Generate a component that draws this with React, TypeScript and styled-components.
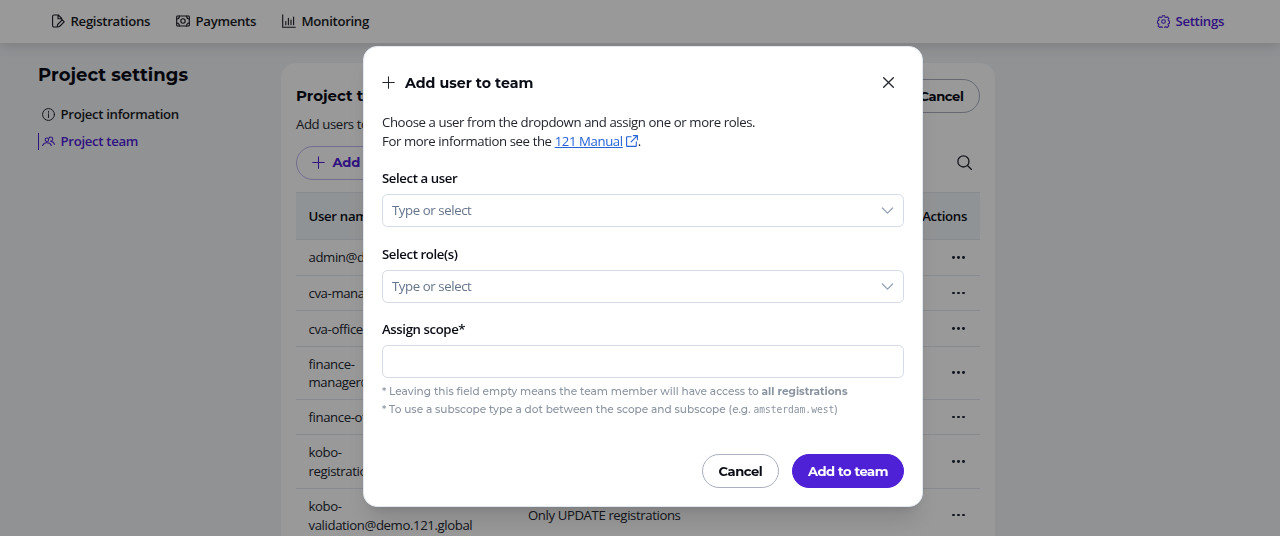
import React from "react";
import styled, { createGlobalStyle, css } from "styled-components";

const GlobalStyle = createGlobalStyle`
  * { box-sizing: border-box; }
  body {
    margin: 0;
    height: 536px;
    overflow: hidden;
    background: #f1f3f7;
    color: #23262f;
    font: 400 13.2px/18.7px "Open Sans", sans-serif;
    letter-spacing: -0.4px;
  }
  button, input { font: inherit; color: inherit; }
  svg { display: block; flex: none; }
`;

const heading = css`
  font-family: Montserrat, Inter, sans-serif;
  font-weight: 700;
  letter-spacing: 0;
  color: #0b0d16;
`;

const Page = styled.div`
  height: 536px;
  overflow: hidden;
`;

const TopBar = styled.header`
  display: flex;
  justify-content: space-between;
  height: 43px;
  padding: 0 56px 0 51px;
  background: #fff;
  box-shadow: 0 2px 14px rgba(0, 0, 0, 0.16);
`;

const TabGroup = styled.nav`
  display: flex;
  gap: 26px;
`;

const Tab = styled.a<{ $active?: boolean }>`
  display: flex;
  align-items: center;
  gap: 5.5px;
  font-weight: 600;
  letter-spacing: -0.32px;
  color: ${(p) => (p.$active ? "#4f21d6" : "#1a1c25")};
  svg { margin-bottom: 1px; }
`;

const Content = styled.div`
  display: flex;
  padding-left: 38px;
`;

const Sidebar = styled.aside`
  width: 243px;
  padding-top: 20px;
`;

const SideTitle = styled.h1`
  ${heading}
  margin: 0 0 19px;
  font-size: 18px;
  line-height: 24px;
  letter-spacing: 0.05px;
`;

const SideLink = styled.a<{ $active?: boolean }>`
  display: flex;
  align-items: center;
  gap: 5.5px;
  height: 17px;
  margin-bottom: 10px;
  padding-left: 3px;
  border-left: 1px solid ${(p) => (p.$active ? "#4f21d6" : "transparent")};
  font-weight: 600;
  letter-spacing: -0.32px;
  color: ${(p) => (p.$active ? "#4f21d6" : "#1a1c25")};
`;

const Card = styled.section`
  width: 714px;
  height: 560px;
  margin-top: 20px;
  padding: 15px;
  border-radius: 15px;
  background: #fff;
`;

const CardHead = styled.div`
  display: flex;
  justify-content: space-between;
  align-items: center;
  height: 36px;
`;

const CardTitle = styled.h2`
  ${heading}
  margin: 0;
  font-size: 15px;
`;

const CardText = styled.p`
  margin: 1px 0 12px;
`;

const PillButton = styled.button<{ $kind?: "primary" | "soft" }>`
  ${heading}
  display: flex;
  align-items: center;
  justify-content: center;
  height: 34px;
  min-width: 77px;
  padding: 0 15px;
  border: 1px solid #a9b0bf;
  border-radius: 17px;
  background: #fff;
  font-size: 13.1px;
  letter-spacing: -0.44px;
  ${(p) => p.$kind === "primary" && css`
    border-color: #4f21d6;
    background: #4f21d6;
    color: #fff;
  `}
  ${(p) => p.$kind === "soft" && css`
    gap: 7.5px;
    letter-spacing: -0.1px;
    border-color: #c3b8f5;
    color: #4f21d6;
  `}
`;

const Toolbar = styled.div`
  display: flex;
  justify-content: space-between;
  align-items: center;
  padding-right: 8px;
  margin-bottom: 12px;
`;

const Table = styled.div`
  width: 684px;
`;

const Row = styled.div<{ $height: number; $head?: boolean }>`
  display: grid;
  grid-template-columns: 219.5px 1fr auto;
  align-items: center;
  height: ${(p) => p.$height}px;
  padding: 1.2px 13px 0 12.5px;
  border-bottom: 1px solid #e2e8f0;
  ${(p) => p.$head && css`
    border-top: 1px solid #e2e8f0;
    background: #f1f5f9;
    font-weight: 600;
    letter-spacing: -0.32px;
    color: #0b0d16;
  `}
`;

const Cell = styled.div`
  white-space: pre-line;
`;

const Dots = styled.span`
  display: flex;
  gap: 2.4px;
  margin: 0 2px 1px 0;
  &::before, &::after, i { content: ""; width: 2.8px; height: 2.8px; border-radius: 50%; background: #1c2333; }
`;

const Overlay = styled.div`
  position: fixed;
  inset: 0;
  display: flex;
  justify-content: center;
  align-items: flex-start;
  padding: 46px 0 0 6px;
  background: rgba(0, 0, 0, 0.4);
`;

const Dialog = styled.div`
  width: 560px;
  height: 461px;
  padding: 17.5px 18px;
  border: 1px solid #e2e8f0;
  border-radius: 14px;
  background: #fff;
  box-shadow: 0 18px 24px -5px rgba(0, 0, 0, 0.12), 0 7px 10px -6px rgba(0, 0, 0, 0.12);
`;

const DialogHead = styled.div`
  display: flex;
  align-items: center;
  height: 36px;
  padding-right: 9px;
  svg { margin-bottom: 1px; }
`;

const DialogTitle = styled.h2`
  ${heading}
  flex: 1;
  margin: 1px 0 0 10px;
  font-size: 14.2px;
`;

const Intro = styled.p`
  margin: 12.5px 0 18.5px;
`;

const ManualLink = styled.a`
  display: inline-flex;
  align-items: center;
  gap: 3px;
  color: #2563d9;
  span { text-decoration: underline; }
`;

const Field = styled.div`
  display: flex;
  flex-direction: column;
  gap: 6px;
  height: 75.6px;
`;

const Label = styled.label`
  height: 19px;
  font-weight: 600;
  color: #0b0d16;
`;

const Control = styled.div`
  display: flex;
  align-items: center;
  justify-content: space-between;
  height: 33px;
  padding: 0 9px;
  border: 1px solid #d3dbe6;
  border-radius: 5.5px;
  color: #64748b;
  svg { color: #94a3b8; }
`;

const Hints = styled.div`
  margin-top: -12.5px;
  font: 500 10.55px/18px Montserrat, Inter, sans-serif;
  letter-spacing: 0;
  color: #8a94a0;
  code { font: 9.6px "DejaVu Sans Mono", monospace; }
  b { font-weight: 700; }
  p { margin: 0; }
`;

const Actions = styled.div`
  display: flex;
  justify-content: flex-end;
  gap: 13px;
  margin-top: 35px;
`;

type IconName = "edit" | "money" | "chart" | "cog" | "info" | "users" | "plus" | "close" | "search" | "chevron" | "external";

const shapes: Record<IconName, React.ReactNode> = {
  edit: <path d="M6 13H3a1.4 1.4 0 0 1-1.4-1.4V2.4A1.4 1.4 0 0 1 3 1h4.3l3.4 3.4V6M7 1v3.7h3.7M6.2 13l.4-2.5 4.7-4.6 1.9 1.9-4.7 4.7z" />,
  money: <><rect x=".7" y="2" width="12.6" height="10" rx=".7" /><circle cx="7" cy="7" r="2.2" /><path d="M.7 5c1.7 0 2.7-1.2 2.7-3M13.3 5c-1.7 0-2.7-1.2-2.7-3M.7 9c1.7 0 2.7 1.2 2.7 3M13.3 9c-1.7 0-2.7 1.2-2.7 3" /></>,
  chart: <path d="M.7.8v12.5h12.6M3.8 7.5v3.3M6.4 4.2v6.6M9 6v4.8M11.6 3v7.8" />,
  cog: <><circle cx="7" cy="7" r="2" /><path d="M5.7.7h2.6l.3 1.7 1.1.4 1.4-.9 1.7 1.7-.9 1.5.4 1 1.2.4v2.3l-1.4.5-.3 1 .9 1.4-1.8 1.8-1.4-.9-1.1.4-.4 1.5H5.9l-.4-1.5-1.1-.4-1.4.9-1.8-1.8.9-1.4-.4-1L.5 8.9V6.4l1.3-.4.4-1-.9-1.4L3 1.9l1.4.9 1-.4z" /></>,
  info: <><circle cx="7" cy="7" r="6.4" /><path d="M7 6.3v4M7 3.6v1.1" /></>,
  users: <><circle cx="5.3" cy="5.2" r="1.9" /><path d="M.7 11.3c.7-2 2.3-3 4.6-3s4.1 1 4.8 3M7.4 3.4a2.2 2.2 0 1 1 1.8 3.2M9.8 7.1c2 .2 3.2 1.2 3.6 3" /></>,
  plus: <path d="M7 .8v12.4M.8 7h12.4" />,
  close: <path d="m1.8 1.8 10.4 10.4M12.2 1.8 1.8 12.2" />,
  search: <><circle cx="6" cy="6" r="5.2" /><path d="m9.8 9.8 3.7 3.7" /></>,
  chevron: <path d="m1.5 4.3 5.5 5.5 5.5-5.5" />,
  external: <path d="M6 2H1.2A.5.5 0 0 0 .7 2.5v10.3a.5.5 0 0 0 .5.5h10.3a.5.5 0 0 0 .5-.5V8M8.6.7h4.7v4.7M13.2.8 6 8" />,
};

function Icon({ name, size = 13, weight = 1.1 }: { name: IconName; size?: number; weight?: number }) {
  return (
    <svg width={size} height={size} viewBox="0 0 14 14" fill="none" stroke="currentColor" strokeWidth={weight} strokeLinecap="round" strokeLinejoin="round">
      {shapes[name]}
    </svg>
  );
}

const users = [
  { name: "admin@demo.121.global", role: "", height: 36 },
  { name: "cva-manager@demo.121.global", role: "", height: 35.5 },
  { name: "cva-officer@demo.121.global", role: "", height: 35.5 },
  { name: "finance-\nmanager@demo.121.global", role: "", height: 53 },
  { name: "finance-officer@demo.121.global", role: "", height: 35.5 },
  { name: "kobo-\nregistration@demo.121.global", role: "", height: 53.5 },
  { name: "kobo-\nvalidation@demo.121.global", role: "Only UPDATE registrations", height: 53.5 },
];

export default function App() {
  return (
    <>
      <GlobalStyle />
      <Page>
        <TopBar>
          <TabGroup>
            <Tab><Icon name="edit" size={14} />Registrations</Tab>
            <Tab><Icon name="money" size={14} />Payments</Tab>
            <Tab><Icon name="chart" size={14} />Monitoring</Tab>
          </TabGroup>
          <Tab $active><Icon name="cog" />Settings</Tab>
        </TopBar>
        <Content>
          <Sidebar>
            <SideTitle>Project settings</SideTitle>
            <SideLink><Icon name="info" weight={1} />Project information</SideLink>
            <SideLink $active><Icon name="users" />Project team</SideLink>
          </Sidebar>
          <Card>
            <CardHead>
              <CardTitle>Project team</CardTitle>
              <PillButton>Cancel</PillButton>
            </CardHead>
            <CardText>Add users to the project</CardText>
            <Toolbar>
              <PillButton $kind="soft"><Icon name="plus" />Add user</PillButton>
              <Icon name="search" size={15} weight={1.2} />
            </Toolbar>
            <Table>
              <Row $height={48} $head>
                <Cell>User name</Cell><Cell /><Cell>Actions</Cell>
              </Row>
              {users.map((u) => (
                <Row key={u.name} $height={u.height}>
                  <Cell>{u.name}</Cell>
                  <Cell>{u.role}</Cell>
                  <Dots><i /></Dots>
                </Row>
              ))}
            </Table>
          </Card>
        </Content>
      </Page>
      <Overlay>
        <Dialog role="dialog">
          <DialogHead>
            <Icon name="plus" />
            <DialogTitle>Add user to team</DialogTitle>
            <Icon name="close" weight={1.4} />
          </DialogHead>
          <Intro>
            Choose a user from the dropdown and assign one or more roles.<br />
            For more information see the <ManualLink><span>121 Manual</span><Icon name="external" size={12} weight={1.3} /></ManualLink>.
          </Intro>
          <Field><Label>Select a user</Label><Control>Type or select<Icon name="chevron" weight={1.4} /></Control></Field>
          <Field><Label>Select role(s)</Label><Control>Type or select<Icon name="chevron" weight={1.4} /></Control></Field>
          <Field><Label>Assign scope*</Label><Control /></Field>
          <Hints>
            <p>* Leaving this field empty means the team member will have access to <b>all registrations</b></p>
            <p>* To use a subscope type a dot between the scope and subscope (e.g. <code>amsterdam.west</code>)</p>
          </Hints>
          <Actions>
            <PillButton>Cancel</PillButton>
            <PillButton $kind="primary">Add to team</PillButton>
          </Actions>
        </Dialog>
      </Overlay>
    </>
  );
}
